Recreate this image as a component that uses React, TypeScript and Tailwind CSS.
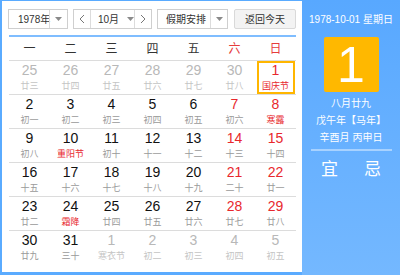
import React from "react";

type Cell = { d: number; l: string; muted?: boolean; red?: boolean; lred?: boolean; sel?: boolean };

const rows: Cell[][] = [
  [
    { d: 25, l: "廿三", muted: true },
    { d: 26, l: "廿四", muted: true },
    { d: 27, l: "廿五", muted: true },
    { d: 28, l: "廿六", muted: true },
    { d: 29, l: "廿七", muted: true },
    { d: 30, l: "廿八", muted: true },
    { d: 1, l: "国庆节", red: true, lred: true, sel: true },
  ],
  [
    { d: 2, l: "初一" },
    { d: 3, l: "初二" },
    { d: 4, l: "初三" },
    { d: 5, l: "初四" },
    { d: 6, l: "初五" },
    { d: 7, l: "初六", red: true },
    { d: 8, l: "寒露", red: true, lred: true },
  ],
  [
    { d: 9, l: "初八" },
    { d: 10, l: "重阳节", lred: true },
    { d: 11, l: "初十" },
    { d: 12, l: "十一" },
    { d: 13, l: "十二" },
    { d: 14, l: "十三", red: true },
    { d: 15, l: "十四", red: true },
  ],
  [
    { d: 16, l: "十五" },
    { d: 17, l: "十六" },
    { d: 18, l: "十七" },
    { d: 19, l: "十八" },
    { d: 20, l: "十九" },
    { d: 21, l: "二十", red: true },
    { d: 22, l: "廿一", red: true },
  ],
  [
    { d: 23, l: "廿二" },
    { d: 24, l: "霜降", lred: true },
    { d: 25, l: "廿四" },
    { d: 26, l: "廿五" },
    { d: 27, l: "廿六" },
    { d: 28, l: "廿七", red: true },
    { d: 29, l: "廿八", red: true },
  ],
  [
    { d: 30, l: "廿九" },
    { d: 31, l: "三十" },
    { d: 1, l: "寒衣节", muted: true },
    { d: 2, l: "初二", muted: true },
    { d: 3, l: "初三", muted: true },
    { d: 4, l: "初四", muted: true },
    { d: 5, l: "初五", muted: true },
  ],
];

const weekdays = ["一", "二", "三", "四", "五", "六", "日"];

function Caret() {
  return (
    <svg width="7" height="4" viewBox="0 0 7 4">
      <path d="M0 0 L7 0 L3.5 4 Z" fill="#8a8a8a" />
    </svg>
  );
}

export default function App() {
  return (
    <div
      className="w-[400px] h-[275px] flex bg-[#5aabff] overflow-hidden"
      style={{ fontFamily: '"Liberation Sans", "Noto Sans CJK SC", sans-serif' }}
    >
      <div className="w-[300px] ml-[2px] mt-[1px] mb-[3px] bg-white flex flex-col pl-[7px] pt-[8px]">
        {/* controls */}
        <div className="flex items-center h-[20px] text-[10px] text-[#333] -ml-[1px] whitespace-nowrap">
          <div className="flex h-[20px] w-[60px] border border-[#cfcfcf] bg-white">
            <div className="w-[40px] flex items-center pl-[9px]">1978年</div>
            <div className="flex-1 border-l border-[#dcdcdc] flex items-center justify-center">
              <Caret />
            </div>
          </div>
          <div className="flex h-[20px] w-[79px] ml-[5px] border border-[#cfcfcf] bg-white">
            <div className="w-[17px] flex items-center justify-center border-r border-[#dcdcdc]">
              <svg width="6" height="10" viewBox="0 0 6 10">
                <path d="M5 1 L1 5 L5 9" stroke="#777" strokeWidth="1" fill="none" />
              </svg>
            </div>
            <div className="flex-1 flex items-center pl-[7px] gap-[8px]">
              <span>10月</span>
              <Caret />
            </div>
            <div className="w-[17px] flex items-center justify-center border-l border-[#dcdcdc]">
              <svg width="6" height="10" viewBox="0 0 6 10">
                <path d="M1 1 L5 5 L1 9" stroke="#777" strokeWidth="1" fill="none" />
              </svg>
            </div>
          </div>
          <div className="flex h-[20px] w-[71px] ml-[5px] border border-[#cfcfcf] bg-white">
            <div className="w-[52px] flex items-center pl-[8px]">假期安排</div>
            <div className="flex-1 border-l border-[#dcdcdc] flex items-center justify-center">
              <Caret />
            </div>
          </div>
          <div className="flex h-[20px] w-[62px] ml-[6px] border border-[#d9d9d9] bg-[#f3f3f3] rounded-[2px] items-center justify-center">
            返回今天
          </div>
        </div>
        <div className="mt-[6px] h-[2px] w-[287px] bg-[#7fbdff]" />
        {/* weekdays */}
        <div className="flex w-[287px] h-[24px] border-b border-[#dcdcdc] items-center text-[12px]">
          {weekdays.map((w, i) => (
            <div
              key={w}
              className={`w-[41px] text-center ${i >= 5 ? "text-[#e63c3c]" : "text-[#333]"}`}
            >
              {w}
            </div>
          ))}
        </div>
        {rows.map((r, ri) => (
          <div
            key={ri}
            className={`flex w-[287px] h-[34px] ${ri < rows.length - 1 ? "border-b border-[#dcdcdc]" : ""}`}
          >
            {r.map((c, ci) => (
              <div key={ci} className="w-[41px] flex justify-center">
                <div
                  className={`w-[38px] h-[33px] flex flex-col items-center border-2 ${
                    c.sel ? "border-[#ffb600]" : "border-transparent"
                  }`}
                >
                  <div
                    className={`text-[14px] leading-[16px] -mt-[1px] ${
                      c.muted ? "text-[#b8b8b8]" : c.red ? "text-[#e8282d]" : "text-[#111]"
                    }`}
                  >
                    {c.d}
                  </div>
                  <div
                    className={`text-[9px] leading-[12px] mt-[2px] whitespace-nowrap ${
                      c.lred ? "text-[#e8282d]" : c.muted ? "text-[#c4c4c4]" : "text-[#9a9a9a]"
                    }`}
                  >
                    {c.l}
                  </div>
                </div>
              </div>
            ))}
          </div>
        ))}
      </div>
      {/* right panel */}
      <div className="flex-1 bg-gradient-to-b from-[#58a8ff] to-[#74b8ff] flex flex-col items-center text-white text-[10px]">
        <div className="mt-[13px] leading-[14px] whitespace-nowrap">1978-10-01 星期日</div>
        <div className="mt-[10px] w-[55px] h-[55px] bg-[#ffb800] rounded-[2px] flex items-center justify-center text-[50px] leading-none">
          1
        </div>
        <div className="mt-[3px] leading-[17px] whitespace-nowrap">八月廿九</div>
        <div className="leading-[17px] whitespace-nowrap">戊午年【马年】</div>
        <div className="leading-[17px] whitespace-nowrap">辛酉月 丙申日</div>
        <div className="mt-[3px] w-[81px] h-[2px] bg-[#a8d2ff]" />
        <div className="mt-[8px] flex w-[60px] justify-between text-[17px] leading-[22px]">
          <span>宜</span>
          <span>忌</span>
        </div>
      </div>
    </div>
  );
}
